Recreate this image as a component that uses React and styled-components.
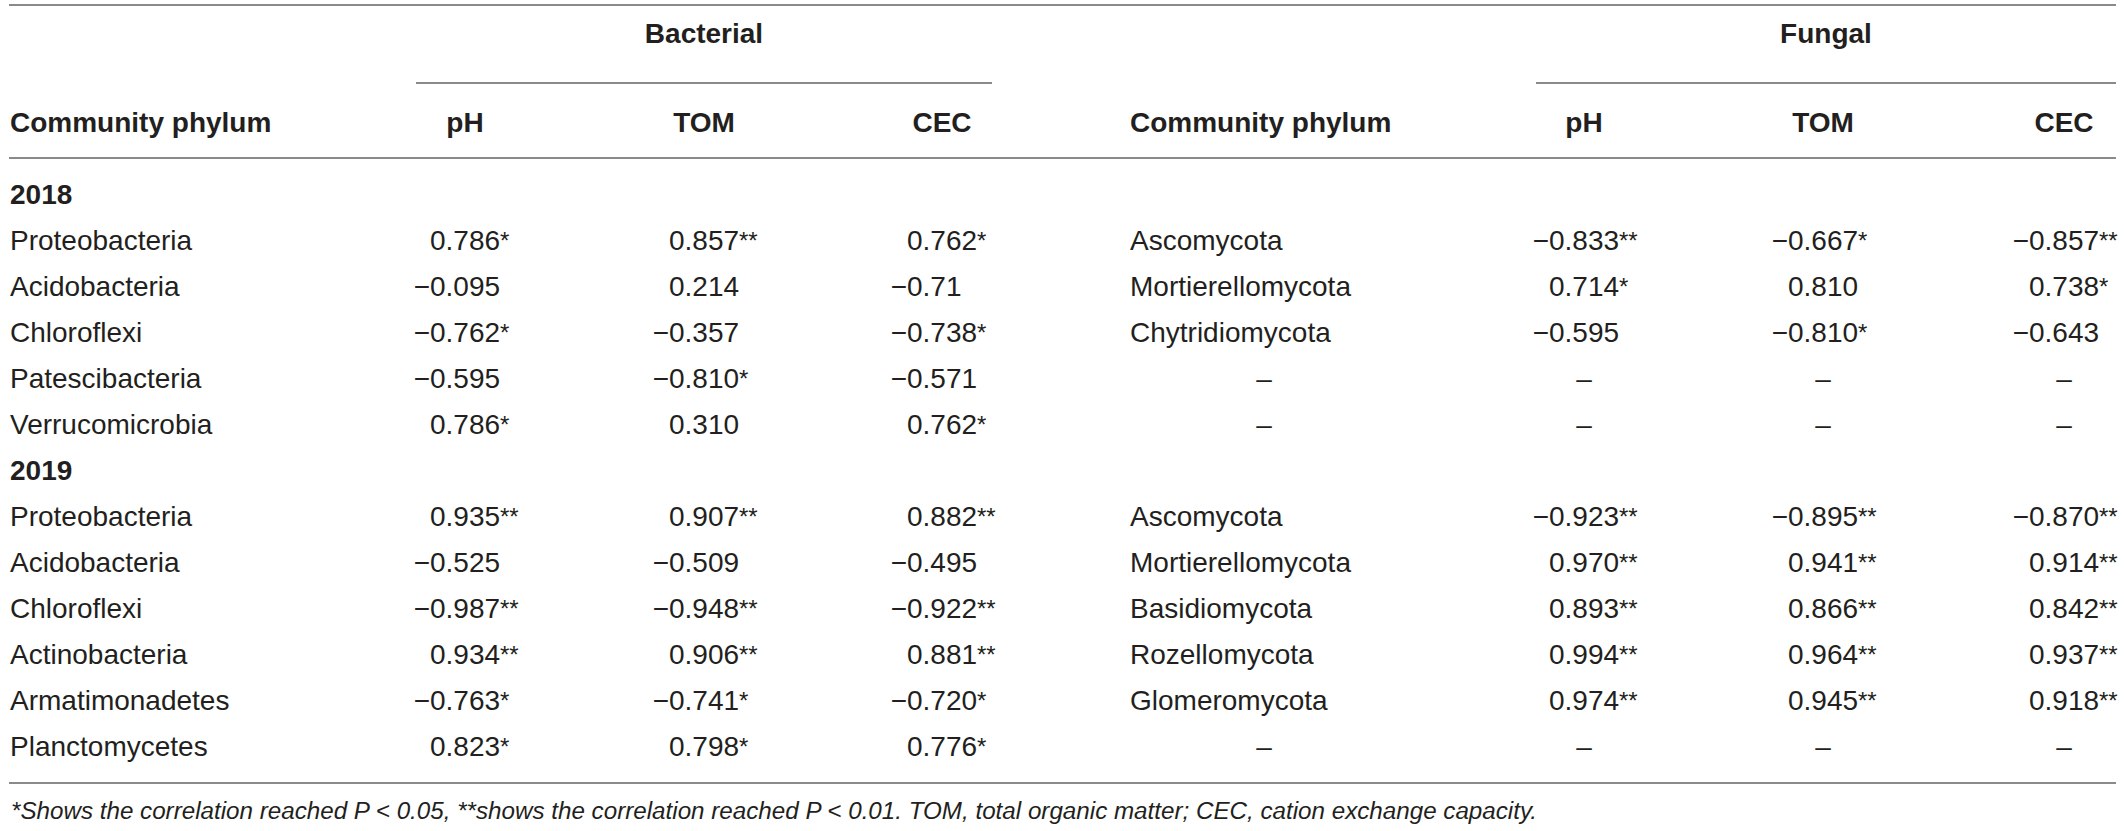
import styled, { createGlobalStyle } from 'styled-components';

const COLS = '337px 238px 240px 236px 408px 232px 246px 170px';

const rows = [
  { year: '2018' },
  { b: ['Proteobacteria', '0.786*', '0.857**', '0.762*'], f: ['Ascomycota', '−0.833**', '−0.667*', '−0.857**'] },
  { b: ['Acidobacteria', '−0.095', '0.214', '−0.71'], f: ['Mortierellomycota', '0.714*', '0.810', '0.738*'] },
  { b: ['Chloroflexi', '−0.762*', '−0.357', '−0.738*'], f: ['Chytridiomycota', '−0.595', '−0.810*', '−0.643'] },
  { b: ['Patescibacteria', '−0.595', '−0.810*', '−0.571'], f: ['–', '–', '–', '–'] },
  { b: ['Verrucomicrobia', '0.786*', '0.310', '0.762*'], f: ['–', '–', '–', '–'] },
  { year: '2019' },
  { b: ['Proteobacteria', '0.935**', '0.907**', '0.882**'], f: ['Ascomycota', '−0.923**', '−0.895**', '−0.870**'] },
  { b: ['Acidobacteria', '−0.525', '−0.509', '−0.495'], f: ['Mortierellomycota', '0.970**', '0.941**', '0.914**'] },
  { b: ['Chloroflexi', '−0.987**', '−0.948**', '−0.922**'], f: ['Basidiomycota', '0.893**', '0.866**', '0.842**'] },
  { b: ['Actinobacteria', '0.934**', '0.906**', '0.881**'], f: ['Rozellomycota', '0.994**', '0.964**', '0.937**'] },
  { b: ['Armatimonadetes', '−0.763*', '−0.741*', '−0.720*'], f: ['Glomeromycota', '0.974**', '0.945**', '0.918**'] },
  { b: ['Planctomycetes', '0.823*', '0.798*', '0.776*'], f: ['–', '–', '–', '–'] },
];

// padding-left per value column, so the number sits under its header
const valuePad = [0, 0, 0, 0, 0, 66];

function Value({ text }) {
  if (text === '–') return <Dash>–</Dash>;
  const neg = text.startsWith('−');
  const stars = (text.match(/\*+$/) || [''])[0];
  const num = text.replace('−', '').replace(/\*+$/, '');
  return (
    <Figure>
      <Sign>{neg ? '−' : ''}</Sign>
      <Num>{num}</Num>
      <Stars>{stars}</Stars>
    </Figure>
  );
}

function App() {
  return (
    <>
      <GlobalStyle />
      <Table>
        <GroupRow>
          <span />
          <GroupCell $from={2} $to={5} $padL={70} $padR={68}>
            <GroupTitle>Bacterial</GroupTitle>
          </GroupCell>
          <span />
          <GroupCell $from={6} $to={9} $padL={68} $padR={0}>
            <GroupTitle>Fungal</GroupTitle>
          </GroupCell>
        </GroupRow>

        <HeadRow>
          <HeadName>Community phylum</HeadName>
          <HeadCol>pH</HeadCol>
          <HeadCol>TOM</HeadCol>
          <HeadCol>CEC</HeadCol>
          <HeadName $indent>Community phylum</HeadName>
          <HeadCol>pH</HeadCol>
          <HeadCol>TOM</HeadCol>
          <HeadCol $pad={66}>CEC</HeadCol>
        </HeadRow>

        <Body>
          {rows.map((r, i) =>
            r.year ? (
              <Row key={i}>
                <Year>{r.year}</Year>
              </Row>
            ) : (
              <Row key={i}>
                <Name>{r.b[0]}</Name>
                {r.b.slice(1).map((v, j) => (
                  <Cell key={'b' + j} $pad={valuePad[j]}>
                    <Value text={v} />
                  </Cell>
                ))}
                <Name $indent $center={r.f[0] === '–'}>{r.f[0]}</Name>
                {r.f.slice(1).map((v, j) => (
                  <Cell key={'f' + j} $pad={valuePad[j + 3]}>
                    <Value text={v} />
                  </Cell>
                ))}
              </Row>
            )
          )}
        </Body>

        <Footnote>
          *Shows the correlation reached P &lt; 0.05, **shows the correlation reached P &lt; 0.01. TOM, total organic
          matter; CEC, cation exchange capacity.
        </Footnote>
      </Table>
    </>
  );
}

const GlobalStyle = createGlobalStyle`
  body {
    margin: 0;
    background: #fff;
    font-family: "Liberation Sans", Arial, sans-serif;
    color: #231f20;
  }
`;

const Table = styled.section`
  margin: 4px 0 0 9px;
  width: 2107px;
  border-top: 2px solid #8a8a8a;
`;

const GroupRow = styled.div`
  display: grid;
  grid-template-columns: ${COLS};
`;

const GroupCell = styled.div`
  grid-column: ${(p) => p.$from} / ${(p) => p.$to};
  padding: 5px ${(p) => p.$padR}px 0 ${(p) => p.$padL}px;
`;

const GroupTitle = styled.div`
  font-size: 28px;
  font-weight: 700;
  line-height: 46px;
  text-align: center;
  padding-bottom: 25px;
  border-bottom: 2px solid #8a8a8a;
`;

const HeadRow = styled.div`
  display: grid;
  grid-template-columns: ${COLS};
  padding: 16px 0 11px;
  border-bottom: 2px solid #8a8a8a;
  font-size: 28px;
  font-weight: 700;
  line-height: 46px;
`;

const HeadName = styled.div`
  padding-left: ${(p) => (p.$indent ? 70 : 1)}px;
  white-space: nowrap;
`;

const HeadCol = styled.div`
  text-align: center;
  padding-left: ${(p) => p.$pad || 0}px;
`;

const Body = styled.div`
  padding: 13px 0 12px;
  border-bottom: 2px solid #8a8a8a;
`;

const Row = styled.div`
  display: grid;
  grid-template-columns: ${COLS};
  height: 46px;
  align-items: center;
  font-size: 28px;
  line-height: 46px;
`;

const Year = styled.div`
  grid-column: 1 / 2;
  font-weight: 700;
  padding-left: 1px;
`;

const Name = styled.div`
  padding: 0 ${(p) => (p.$indent ? 70 : 0)}px 0 ${(p) => (p.$indent ? 70 : 1)}px;
  text-align: ${(p) => (p.$center ? 'center' : 'left')};
  white-space: nowrap;
`;

const Cell = styled.div`
  display: flex;
  justify-content: center;
  padding-left: ${(p) => p.$pad}px;
`;

const Figure = styled.div`
  display: flex;
  white-space: nowrap;
`;

const Sign = styled.span`
  width: 26px;
  flex: none;
  text-align: right;
`;

const Num = styled.span`
  width: 70px;
  flex: none;
`;

const Stars = styled.span`
  width: 26px;
  flex: none;
  font-size: 24px;
`;

const Dash = styled.span``;

const Footnote = styled.p`
  margin: 12px 0 0 2px;
  font-size: 24.2px;
  font-style: italic;
  line-height: 30px;
  white-space: nowrap;
`;

export default App;
